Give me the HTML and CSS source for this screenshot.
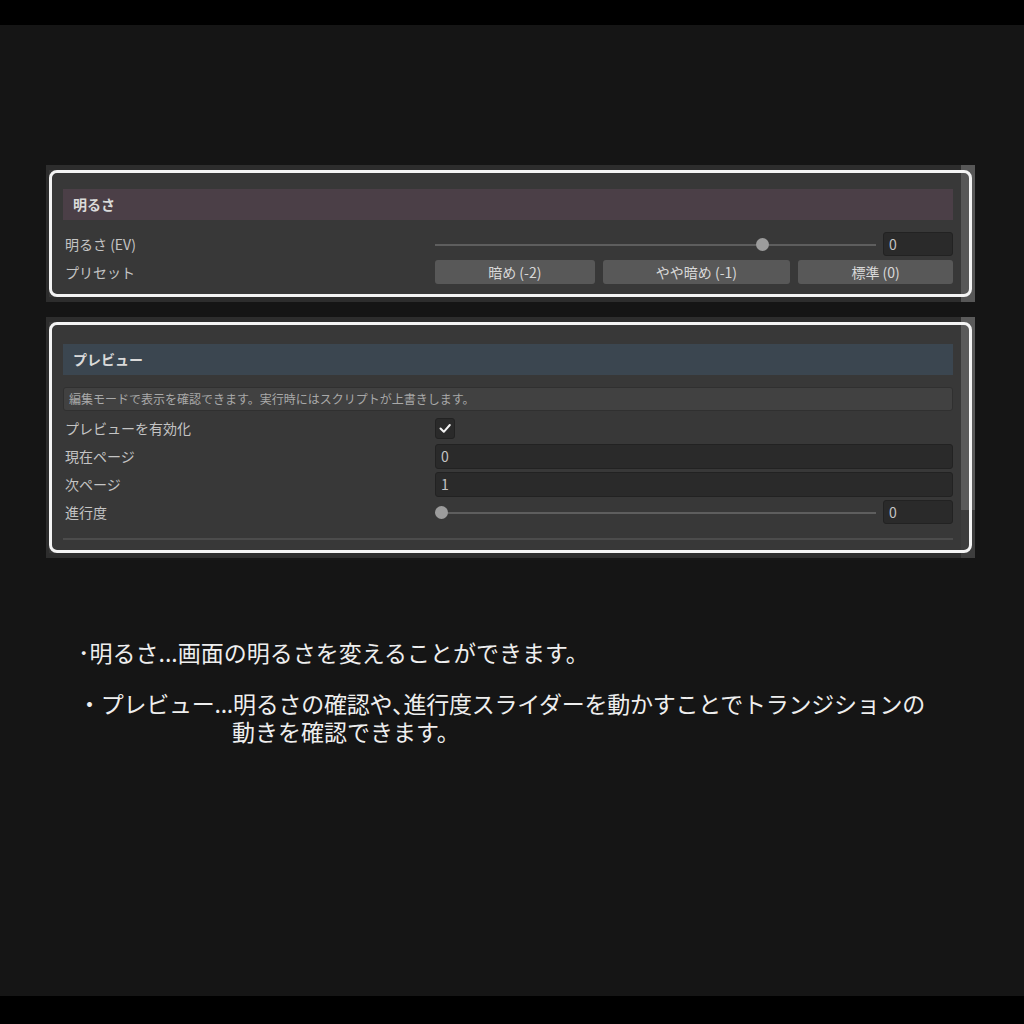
FILE: index.html
```html
<!DOCTYPE html>
<html lang="ja">
<head>
  <meta charset="utf-8">
  <title>明るさ / プレビュー</title>
  <meta name="viewport" content="width=device-width, initial-scale=1.0">
  <link rel="stylesheet" href="styles.css">
</head>
<body>
  <div class="screen">
    <div class="bar"></div>

    <main class="stage">
      <section class="shot">
        <div class="pane pane-top">
          <div class="head head-bright">明るさ</div>
          <div class="row">
            <span class="label">明るさ (EV)</span>
            <div class="ctrl">
              <div class="slider"><div class="rail"><span class="thumb" style="left: 75%"></span></div></div>
              <span class="num">0</span>
            </div>
          </div>
          <div class="row">
            <span class="label">プリセット</span>
            <div class="ctrl btns">
              <button class="btn">暗め (-2)</button>
              <button class="btn">やや暗め (-1)</button>
              <button class="btn">標準 (0)</button>
            </div>
          </div>
        </div>
        <div class="scroll"></div>
        <div class="mark"></div>
      </section>

      <section class="shot shot-preview">
        <div class="pane pane-preview">
          <div class="head head-preview">プレビュー</div>
          <div class="help">編集モードで表示を確認できます。実行時にはスクリプトが上書きします。</div>
          <div class="row">
            <span class="label">プレビューを有効化</span>
            <div class="ctrl">
              <span class="check">
                <svg width="20" height="21" viewBox="0 0 20 21"><path d="M5.5 10.5 L8.8 13.8 L14.8 7" fill="none" stroke="#f2f2f2" stroke-width="2" stroke-linecap="round" stroke-linejoin="round"/></svg>
              </span>
            </div>
          </div>
          <div class="row">
            <span class="label">現在ページ</span>
            <div class="ctrl"><span class="field">0</span></div>
          </div>
          <div class="row">
            <span class="label">次ページ</span>
            <div class="ctrl"><span class="field">1</span></div>
          </div>
          <div class="row">
            <span class="label">進行度</span>
            <div class="ctrl">
              <div class="slider"><div class="rail"><span class="thumb" style="left: 0%"></span></div></div>
              <span class="num">0</span>
            </div>
          </div>
          <div class="sep"></div>
        </div>
        <div class="scroll scroll-part"><div class="scroll-thumb"></div></div>
        <div class="mark"></div>
      </section>

      <div class="notes">
        <p class="note">･明るさ...画面の明るさを変えることができます。</p>
        <p class="note note-two">・プレビュー...明るさの確認や<span class="tight">、</span>進行度スライダーを動かすことでトランジションの</p>
        <p class="note indent">動きを確認できます。</p>
      </div>
    </main>

    <div class="bar bar-bottom"></div>
  </div>
</body>
</html>
```

FILE: styles.css
```css
body {
  margin: 0;
  background-color: #000;
  font-family: "Noto Sans CJK JP", "Noto Sans", sans-serif;
}

.screen {
  display: flex;
  flex-direction: column;
  width: 1024px;
  height: 1024px;
}

.bar {
  height: 25px;
  background-color: #000;
}

.bar-bottom {
  height: 28px;
}

.stage {
  flex: 1;
  background-color: #151515;
  padding-top: 140px;
}

/* inspector screenshots */
.shot {
  position: relative;
  display: flex;
  width: 929px;
  margin-left: 46px;
}

.shot-preview {
  margin-top: 15px;
}

.pane {
  flex: 1;
  background-color: #383838;
  border-style: solid;
  border-color: #2d2d2d;
  border-width: 5px 0 5px 3px;
  padding: 19px 8px 11px 14px;
}

.pane-preview {
  padding-top: 22px;
  padding-bottom: 13px;
}

.scroll {
  width: 14px;
  background-color: #575757;
}

.scroll-part {
  background-color: #3d3d3d;
}

.scroll-thumb {
  height: 193px;
  background-color: #5a5a5a;
}

.mark {
  position: absolute;
  top: 5px;
  left: 3px;
  right: 3px;
  bottom: 5px;
  border: 3px solid #f4f4f4;
  border-radius: 8px;
  pointer-events: none;
}

.head {
  height: 31px;
  line-height: 31px;
  padding-left: 10px;
  font-size: 14px;
  font-weight: bold;
  color: #dadada;
}

.head-bright {
  background-color: #4b3f47;
  margin-bottom: 10px;
}

.head-preview {
  background-color: #3b4650;
}

.help {
  margin-top: 12px;
  margin-bottom: 3px;
  height: 22px;
  line-height: 22px;
  padding-left: 5px;
  background-color: #414141;
  border: 1px solid #303030;
  border-radius: 3px;
  font-size: 12px;
  color: #a9a9a9;
}

.row {
  display: flex;
  align-items: center;
  height: 28px;
}

.label {
  width: 370px;
  padding-left: 2px;
  font-size: 14px;
  color: #c4c4c4;
}

.ctrl {
  flex: 1;
  display: flex;
  align-items: center;
  gap: 7px;
}

.slider {
  flex: 1;
  position: relative;
  height: 13px;
}

.slider::before {
  content: "";
  position: absolute;
  left: 0;
  right: 0;
  top: 6px;
  height: 2px;
  background-color: #5e5e5e;
}

.rail {
  position: relative;
  height: 100%;
  margin: 0 6px;
}

.thumb {
  position: absolute;
  top: 0;
  width: 13px;
  height: 13px;
  margin-left: -6.5px;
  border-radius: 50%;
  background-color: #9c9c9c;
}

.num, .field {
  box-sizing: border-box;
  height: 24px;
  line-height: 22px;
  padding-left: 5px;
  background-color: #2a2a2a;
  border: 1px solid #222;
  border-radius: 3px;
  font-size: 14px;
  color: #c4c4c4;
}

.num {
  width: 70px;
}

.field {
  flex: 1;
  height: 25px;
  line-height: 23px;
}

.btns {
  gap: 8px;
}

.btn {
  flex: 1 1 auto;
  height: 24px;
  padding: 0;
  border: none;
  border-radius: 3px;
  background-color: #585858;
  font: inherit;
  font-size: 14px;
  color: #d8d8d8;
}

.check {
  box-sizing: border-box;
  width: 20px;
  height: 21px;
  background-color: #2a2a2a;
  border: 1px solid #222;
  border-radius: 3px;
  display: flex;
}

.check svg {
  margin: -1px;
}

.sep {
  height: 2px;
  margin-top: 12px;
  background-color: #4c4c4c;
}

/* explanation text */
.notes {
  margin-top: 80px;
  padding-left: 78px;
  color: #eeeeee;
  font-size: 23px;
  line-height: 28px;
  white-space: nowrap;
}

.note {
  margin: 0;
}

.note-two {
  margin-top: 23px;
  letter-spacing: -0.25px;
}

.tight {
  font-feature-settings: "palt";
}

.indent {
  padding-left: 154px;
}
```
